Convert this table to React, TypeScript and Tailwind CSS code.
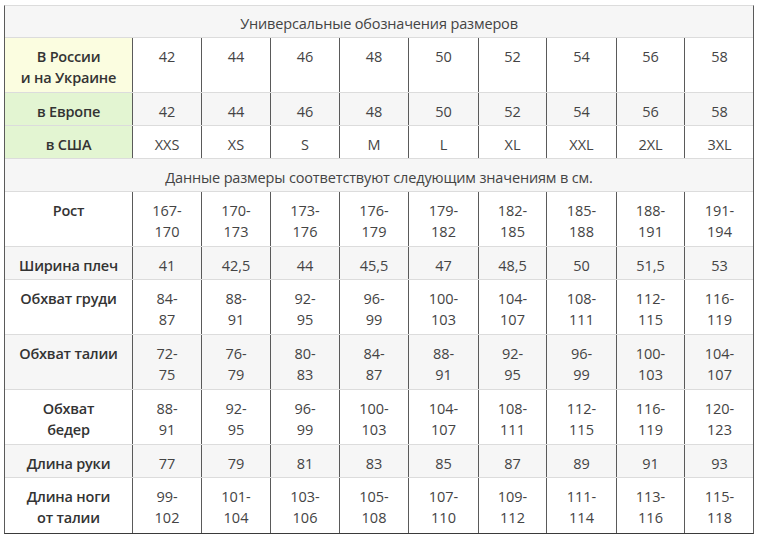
import React from "react";

type Row = { label: string[]; values: string[][]; h: "s" | "d"; bg: string; labelBg?: string };

const sizes = ["42", "44", "46", "48", "50", "52", "54", "56", "58"];

const rowsTop: Row[] = [
  { label: ["В России", "и на Украине"], values: sizes.map((s) => [s]), h: "d", bg: "bg-white", labelBg: "bg-[#fbfde0]" },
  { label: ["в Европе"], values: sizes.map((s) => [s]), h: "s", bg: "bg-[#f6f6f6]", labelBg: "bg-[#e3f5d2]" },
  { label: ["в США"], values: ["XXS", "XS", "S", "M", "L", "XL", "XXL", "2XL", "3XL"].map((s) => [s]), h: "s", bg: "bg-white", labelBg: "bg-[#e3f5d2]" },
];

const range = (a: number[]) => a.map((v) => [`${v}-`, `${v + 3}`]);

const rowsBottom: Row[] = [
  { label: ["Рост"], values: range([167, 170, 173, 176, 179, 182, 185, 188, 191]), h: "d", bg: "bg-white" },
  { label: ["Ширина плеч"], values: ["41", "42,5", "44", "45,5", "47", "48,5", "50", "51,5", "53"].map((s) => [s]), h: "s", bg: "bg-[#f6f6f6]" },
  { label: ["Обхват груди"], values: range([84, 88, 92, 96, 100, 104, 108, 112, 116]), h: "d", bg: "bg-white" },
  { label: ["Обхват талии"], values: range([72, 76, 80, 84, 88, 92, 96, 100, 104]), h: "d", bg: "bg-[#f6f6f6]" },
  { label: ["Обхват", "бедер"], values: range([88, 92, 96, 100, 104, 108, 112, 116, 120]), h: "d", bg: "bg-white" },
  { label: ["Длина руки"], values: ["77", "79", "81", "83", "85", "87", "89", "91", "93"].map((s) => [s]), h: "s", bg: "bg-[#f6f6f6]" },
  { label: ["Длина ноги", "от талии"], values: range([99, 101, 103, 105, 107, 109, 111, 113, 115]), h: "d", bg: "bg-white" },
];

function DataRow({ r, last }: { r: Row; last?: boolean }) {
  return (
    <div
      className={`grid grid-cols-[128px_69px_69px_69px_69px_70px_68px_70px_68px_69px] ${
        r.h === "d" ? "h-[55px]" : "h-[33px]"
      } ${last ? "" : "border-b border-[#dcdcdc]"} ${r.bg}`}
    >
      <div className={`border-r border-[#5a5a5a] pt-[8px] text-center font-semibold tracking-[-0.2px] text-[#333] ${r.labelBg ?? ""}`}>
        {r.label.map((l, i) => (
          <div key={i}>{l}</div>
        ))}
      </div>
      {r.values.map((v, i) => (
        <div key={i} className={`pt-[8px] text-center text-[#444] ${i < 8 ? "border-r border-[#5a5a5a]" : ""}`}>
          {v.map((l, j) => (
            <div key={j}>{l}</div>
          ))}
        </div>
      ))}
    </div>
  );
}

export default function App() {
  return (
    <div className="w-[759px] h-[538px] bg-white pt-[5px] pl-[4px] font-['Open_Sans',sans-serif] text-[14.5px] leading-[21px]">
      <div className="w-[750px] border-t border-t-[#dcdcdc] border-l border-r border-b border-l-[#5a5a5a] border-r-[#5a5a5a] border-b-[#3a3a3a]">
        <div className="h-[32px] border-b border-[#dcdcdc] bg-[#f6f6f6] pt-[7px] text-center text-[#444] tracking-[-0.15px]">
          Универсальные обозначения размеров
        </div>
        {rowsTop.map((r, i) => (
          <DataRow key={i} r={r} />
        ))}
        <div className="h-[33px] border-b border-[#dcdcdc] bg-[#f6f6f6] pt-[8px] text-center text-[#444] tracking-[-0.15px]">
          Данные размеры соответствуют следующим значениям в см.
        </div>
        {rowsBottom.map((r, i) => (
          <DataRow key={i} r={r} last={i === rowsBottom.length - 1} />
        ))}
      </div>
    </div>
  );
}
